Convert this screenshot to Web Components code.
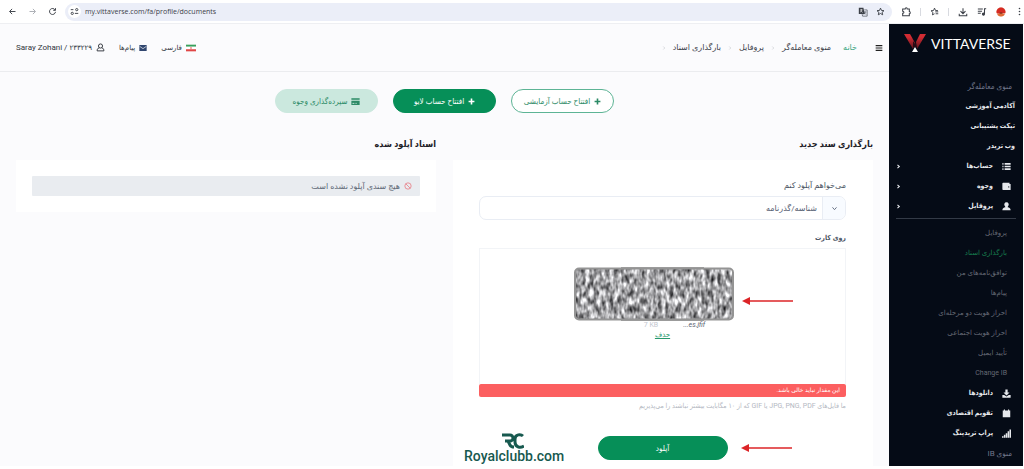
<!DOCTYPE html>
<html lang="fa" dir="rtl">
<head>
<meta charset="utf-8">
<title>بارگذاری اسناد</title>
<style>
html,body{margin:0;background:#fff}
body{--narrow:Roboto,"DejaVu Sans Condensed","DejaVu Sans",sans-serif;font-family:Roboto,"DejaVu Sans",sans-serif;font-size:7px;color:#3d424b}
</style>
</head>
<body>
<app-shell></app-shell>
<script>
const icons={
back:'<path d="M20 12H5M11 5l-7 7 7 7"/>',
fwd:'<path d="M4 12h15M13 5l7 7-7 7"/>',
reload:'<path d="M19 8A8 8 0 1 0 20 13M20 3v6h-6"/>',
tune:'<path d="M2 7h7M13 17h9" /><circle cx="6" cy="17" r="3"/><circle cx="18" cy="7" r="3"/>',
star:'<path d="M12 3l2.7 6.2 6.6.6-5 4.4 1.5 6.600L12 17.300l-5.800 3.500 1.500-6.600-5-4.400 6.600-.6z"/>',
starlist:'<path d="M12 18l-5.500 3 1.300-6.500-5-4.500 6.600-.6L12 3l2.700 6.200 6.600.6M14 13h8M15 18h7"/>',
puzzle:'<path d="M4 5h6c0-4 5-4 5 0h5v6c3 0 3 5 0 5v5H4v-6c4 0 4-5 0-5z"/>',
download:'<path d="M12 3v12M6 10l6 6 6-6M3 16v5h18v-5"/>',
music:'<path d="M2 5h12M2 10h10M2 15h7M18 17V4h4"/><circle cx="15.500" cy="17" r="2.500" fill="currentColor"/>',
dots:'<g fill="currentColor" stroke="none"><circle cx="12" cy="4" r="2.200"/><circle cx="12" cy="12" r="2.200"/><circle cx="12" cy="20" r="2.200"/></g>',
translate:'<path fill="currentColor" stroke="none" d="M2 2h11l3 15H2z"/><path d="M15 7h7v15H11l-1-5" stroke-width="1.500"/><path stroke="#fff" stroke-width="1.500" d="M5 7h6M8 5v2c0 4-2 5-3 5M7 9l4 4"/><path d="M14 12h6M17 11v1c0 3-2 5-3 6M15 14l4 4" stroke-width="1.500"/>',
avatar:'<circle cx="12" cy="12" r="11" fill="#f0c0a8" stroke="none"/><path d="M1 13C1-3 23-3 23 13c-3 4-7 1-11 2-4 1-8 2-11-2z" fill="#d62a22" stroke="none"/><path d="M9 13h6l1 8H8z" fill="#6c2c1b" stroke="none"/><path d="M3 18c5-3 13-3 18 0-4 6-14 6-18 0z" fill="#e06a34" stroke="none"/>',
menu:'<path d="M2 5h20M2 12h20M2 19h20" stroke-width="3.500"/>',
user:'<circle cx="12" cy="8" r="5.500"/><path d="M8.500 13C4 14 3 17 3 21h18c0-4-1-7-5.500-8"/>',
mail:'<path fill="currentColor" stroke="none" d="M1 3h22v18H1z"/><path d="M2 7l10 7 10-7" stroke="#fff" stroke-width="2"/>',
flag:'<path fill="#38a05c" stroke="none" d="M0 4h24v5H0z"/><path fill="#fff" stroke="none" d="M0 9h24v6H0z"/><path fill="#e04646" stroke="none" d="M0 15h24v5H0z"/><circle cx="12" cy="12" r="2" fill="#e04646" stroke="none"/>',
plus:'<path d="M12 2v20M2 12h20" stroke-width="5.500"/>',
card:'<path fill="currentColor" stroke="none" d="M1 3h22v4H1zM1 10h22v11H1z"/><path stroke="#cbe8de" d="M4 17h5M12 17h3"/>',
list:'<path d="M1 5h3M7 5h16M1 12h3M7 12h16M1 19h3M7 19h16" stroke-width="4.500"/>',
wallet:'<path fill="currentColor" stroke="none" d="M1 4q0-2 2-2h17v3h3v16H3q-2 0-2-2z"/><circle cx="18" cy="13" r="1.500" fill="#050b16" stroke="none"/>',
person:'<path fill="currentColor" stroke="none" d="M12 1a6 6 0 0 0-4 10.500l1 2.500c-5 1-8 3-8 8h22c0-5-3-7-8-8l1-2.500A6 6 0 0 0 12 1z"/>',
tray:'<path fill="currentColor" stroke="none" d="M9 1h6v8h5l-8 8-8-8h5zM1 16h5l6 4 6-4h5v7H1z"/>',
cal:'<path fill="currentColor" stroke="none" d="M2 4h3V1h3v3h8V1h3v3h3v18H2z"/>',
signal:'<path fill="currentColor" stroke="none" d="M0 19h4v4H0zM5 15h4v8H5zM10 11h4v12h-4zM15 6h4v17h-4zM20 1h4v22h-4z"/>',
ban:'<circle cx="12" cy="12" r="9.500"/><path d="M5.500 5.500l13 13"/>',
down:'<path d="M5 8l7 8 7-8" stroke-width="3"/>',
left:'<path d="M7 4l9 8-9 8" stroke-width="5"/>',
sep:'<path d="M9 6l6 6-6 6" stroke-width="2"/>'
};
const define=(name,css,html)=>customElements.define(name,class extends HTMLElement{
 constructor(){super();this.attachShadow({mode:'open'}).innerHTML='<style>*{box-sizing:border-box}a{color:inherit;text-decoration:none}'+css+'</style>'+html;}
});
customElements.define('ui-icon',class extends HTMLElement{
 connectedCallback(){
  const s=this.getAttribute('size')||9;
  if(!this.shadowRoot)this.attachShadow({mode:'open'});
  this.shadowRoot.innerHTML='<style>:host{display:inline-flex;flex:none}svg{display:block}</style><svg aria-hidden="true" width="'+s+'" height="'+s+'" viewBox="0 0 24 24" fill="none" stroke="currentColor" stroke-width="2.500">'+icons[this.getAttribute('name')]+'</svg>';
 }
});
define('browser-bar',`
:host{display:flex;direction:ltr;align-items:center;height:24px;box-sizing:border-box;padding:0 0 0 8px;background:#fff;color:#3c4048;border-bottom:1px solid #eeeff2}
.nav{display:flex;gap:11px;width:57px}
.nav ui-icon:nth-child(2){color:#a9acb2}
.url{flex:1;display:flex;align-items:center;gap:8px;height:18px;border-radius:9px;background:#ebeef8;padding:0 7px 0 3px}
.dot{display:flex;padding:2px;margin-right:-4px;border-radius:50%;background:#fff}
input{flex:1;min-width:0;border:0;padding:0;background:none;outline:0;font:7px "Open Sans",sans-serif;color:#3c4048}
.tools{display:flex;align-items:center;gap:9px;margin-left:9px}
i{width:1px;height:8px;background:#d8dae0}
`,`<div class="nav"><ui-icon name="back"></ui-icon><ui-icon name="fwd"></ui-icon><ui-icon name="reload"></ui-icon></div>
<div class="url"><span class="dot"><ui-icon name="tune"></ui-icon></span><input aria-label="Address" value="my.vittaverse.com/fa/profile/documents"><ui-icon name="translate" size="10"></ui-icon><ui-icon name="star"></ui-icon></div>
<div class="tools"><ui-icon name="puzzle" size="10"></ui-icon><i></i><ui-icon name="starlist"></ui-icon><i></i><ui-icon name="download" size="10"></ui-icon><ui-icon name="music" size="10"></ui-icon><ui-icon name="avatar" size="10"></ui-icon><ui-icon name="dots"></ui-icon></div>`);
define('top-bar',`
:host{display:flex;align-items:center;justify-content:space-between;box-sizing:border-box;height:48px;padding:0 6px 0 16px;border-bottom:1px solid #ebecef;font-size:8px}
nav,div{display:flex;align-items:center}
nav{gap:6px}
button{display:flex;border:0;background:none;padding:0;margin-left:12px;color:#222}
.home{color:#3aa57f;margin-left:6px}
div{gap:14px;font-size:7px}
div a{display:flex;align-items:center;gap:4px;color:#30343c}
.who{display:flex;align-items:center;gap:2px;font-size:8px}
.who small{font-size:7px}
nav ui-icon{color:#b5b8bf}nav button ui-icon{color:#222}
.m{color:#30466f}
`,`<nav><button aria-label="منو"><ui-icon name="menu" size="8"></ui-icon></button><a class="home" href="#">خانه</a><a href="#">منوی معامله‌گر</a><ui-icon name="sep" size="6"></ui-icon><a href="#">پروفایل</a><ui-icon name="sep" size="6"></ui-icon><a href="#">بارگذاری اسناد</a><ui-icon name="sep" size="6"></ui-icon></nav>
<div><a href="#"><ui-icon name="flag" size="10"></ui-icon><span>فارسی</span></a><a href="#"><ui-icon class="m" name="mail" size="8"></ui-icon><span>پیام‌ها</span></a><a href="#"><ui-icon name="user" size="9"></ui-icon><span class="who" dir="ltr">Saray Zohani / <small>۲۳۳۲۲۹</small></span></a></div>`);
define('pill-button',`
:host{display:block}
button{display:flex;align-items:center;justify-content:center;gap:4px;width:100%;height:24px;border-radius:12px;border:1px solid #068f58;background:#068f58;color:#fff;font-family:var(--narrow);font-size:8px;padding:0}
:host([kind=outline]) button{background:#fff;color:#2c8a66;border-color:#5db495}
:host([kind=soft]) button{background:#cbe8de;color:#2c8a66;border-color:#cbe8de}
`,`<button><slot></slot></button>`);
define('side-item',`
:host{display:block}
a{display:flex;align-items:center;height:20px;color:#e6e8ec;font-family:var(--narrow);font-weight:bold;font-size:7px;padding-right:8px}
::slotted(ui-icon){margin:0 4px 0 9px}
.arrow{margin-right:auto;margin-left:7px;display:none}
:host([more]) .arrow{display:inline-flex}
:host([kind=head]) a{color:#70768a;font-weight:normal;font-size:8px;padding-right:11px}
:host([kind=sub]) a,:host([kind=active]) a{color:#656a75;font-family:inherit;font-weight:normal;padding-right:16px}
:host([kind=active]) a{color:#17804f}
`,`<a href="#"><slot name="icon"></slot><slot></slot><ui-icon class="arrow" name="left" size="5"></ui-icon></a>`);
define('side-bar',`
:host{display:block;background:#050b16;width:134px;margin-right:1px;padding-bottom:3px}
.logo{display:flex;direction:ltr;align-items:center;box-sizing:border-box;gap:5px;height:52px;padding:0 0 14px 15px;color:#fff;font:14px Lato,sans-serif}
hr{border:0;border-top:1px solid #333a46;margin:2px 7px 4px}
`,`<div class="logo"><svg width="22" height="20" viewBox="0 0 22 20" aria-hidden="true"><defs><linearGradient id="f" x1="0" y1="0" x2="0" y2="1"><stop offset=".2" stop-color="#d22c33"/><stop offset="1" stop-color="#5a121c"/></linearGradient></defs><path d="M0 1h6l5 9-2 6z" fill="url(#f)"/><path d="M22 1h-6l-4 8 1 7z" fill="url(#f)"/><path d="M9 8l2 3 1-2v5H9z" fill="#2a0c16"/><path d="M11 14l3 5H8z" fill="#fff"/></svg><span>VITTAVERSE</span></div>
<side-item kind="head">منوی معامله‌گر</side-item><side-item>آکادمی آموزشی</side-item><side-item>تیکت پشتیبانی</side-item><side-item>وب تریدر</side-item>
<side-item more><ui-icon slot="icon" name="list"></ui-icon>حساب‌ها</side-item><side-item more><ui-icon slot="icon" name="wallet"></ui-icon>وجوه</side-item><side-item more><ui-icon slot="icon" name="person"></ui-icon>پروفایل</side-item><hr>
<side-item kind="sub">پروفایل</side-item><side-item kind="active">بارگذاری اسناد</side-item><side-item kind="sub">توافق‌نامه‌های من</side-item><side-item kind="sub">پیام‌ها</side-item><side-item kind="sub">احراز هویت دو مرحله‌ای</side-item><side-item kind="sub">احراز هویت اجتماعی</side-item><side-item kind="sub">تأیید ایمیل</side-item><side-item kind="sub">Change IB</side-item>
<side-item><ui-icon slot="icon" name="tray"></ui-icon>دانلودها</side-item><side-item><ui-icon slot="icon" name="cal"></ui-icon>تقویم اقتصادی</side-item><side-item><ui-icon slot="icon" name="signal"></ui-icon>پراپ تریدینگ</side-item><side-item kind="head">منوی IB</side-item>`);
define('doc-panel',`
:host{display:flex;flex-direction:column}
h2{margin:0 0 8px;font-family:var(--narrow);font-size:9px;line-height:16px;font-weight:bold;color:#1d2026}
section{background:#fff}
:host([grow]) section{flex:1}
`,`<h2><slot name="title"></slot></h2><section><slot></slot></section>`);
define('empty-note',`
:host{display:block;padding:16px}
div{display:flex;align-items:center;gap:4px;height:20px;padding:0 8px;background:#e9ecf0;border-radius:1px;color:#606977;font-size:8px}
ui-icon{color:#e88088}
`,`<div role="status"><ui-icon name="ban" size="8"></ui-icon><slot></slot></div>`);
define('red-arrow',`:host{display:block;width:51px}svg{display:block}`,`<svg width="51" height="8" viewBox="0 0 51 8" aria-hidden="true"><path d="M7 4h44" stroke="#dc2427" stroke-width="1.500"/><path d="M0 4l8-4v8z" fill="#dc2427"/></svg>`);
define('file-preview',`
:host{display:flex;flex-direction:column;align-items:center;font-size:7px}
.row{display:flex;gap:25px;height:9px;line-height:9px;align-items:center;margin-left:24px}
.size{color:#c3c7d0}
.name{color:#5a6270;font-style:italic}
button{border:0;background:none;padding:0;height:10px;line-height:10px;font:inherit;color:#28996d;text-decoration:underline}
svg{display:block}
.pic{position:relative;margin-right:18px}
red-arrow{position:absolute;left:100%;top:30px;margin-left:8px}
`,`<div class="pic"><svg width="160" height="54" viewBox="0 0 160 54" role="img" aria-label="شناسه"><defs><filter id="n" x="0" y="0" width="100%" height="100%" color-interpolation-filters="sRGB"><feTurbulence type="fractalNoise" baseFrequency="0.25 0.130" numOctaves="2" seed="4"/><feColorMatrix values="1.400 0 0 0 -.06  1.400 0 0 0 -.06  1.400 0 0 0 -.05  0 0 0 0 1"/></filter><clipPath id="c"><rect x="1" y="2" width="158" height="50" rx="4"/></clipPath></defs><path d="M47 .5h83M47 53.500h83" stroke="#a3a3a3"/><g clip-path="url(#c)"><rect width="160" height="54" filter="url(#n)"/></g><rect x="1" y="1.500" width="158" height="51" rx="4" fill="none" stroke="#949494" stroke-width="2"/></svg><red-arrow></red-arrow></div>
<div class="row"><span class="name" dir="ltr">...es.jfif</span><span class="size" dir="ltr">7 KB</span></div><button type="button">حذف</button>`);
define('upload-form',`
:host{display:block;padding:20px 27px 6px 26px;position:relative}
label,h3{display:block;margin:0;font-size:8px;line-height:12px;font-weight:normal;color:#4c5563}
h3{margin:12px 0 4px;font-family:var(--narrow);font-size:7px;font-weight:bold}
.select{display:flex;margin-top:4px;height:24px;border:1px solid #e9edf4;border-radius:7px;background:#fff;overflow:hidden}
.chev{display:flex;align-items:center;justify-content:center;width:23px;border-left:1px solid #e9edf4;background:#f8fbff;color:#596579}
select{flex:1;appearance:none;border:0;background:none;padding:0 5px;font:inherit;font-size:8px;color:#566072;outline:0}
.drop{height:136px;border:1px solid #f2f4f7;border-bottom:0;padding-top:18px}
.err{margin:0;height:13px;line-height:12px;border-radius:2px;background:#fc5f60;color:#fff;padding:0 6px;font-size:6px}
.hint{margin:0;line-height:18px;font-family:var(--narrow);font-size:7px;color:#b4b8c2}
.act{display:flex;justify-content:center;margin-top:21px}
.wrap{position:relative;width:130px}
.wrap red-arrow{position:absolute;left:100%;top:8px;margin-left:13px}
.mark{position:absolute;left:11px;bottom:2px;width:98px;text-align:center;direction:ltr;color:#17594f;font:500 14px/15px Roboto,sans-serif}
.mark svg{display:block;margin:0 auto}
`,`<form><label for="t">می‌خواهم آپلود کنم</label><div class="select"><span class="chev"><ui-icon name="down" size="7"></ui-icon></span><select id="t"><option>شناسه/گذرنامه</option></select></div>
<h3>روی کارت</h3><div class="drop"><file-preview></file-preview></div><p class="err" role="alert">این مقدار نباید خالی باشد.</p><p class="hint">ما فایل‌های JPG, PNG, PDF یا GIF که از ۱۰ مگابایت بیشتر نباشند را می‌پذیریم</p>
<div class="act"><div class="wrap"><pill-button>آپلود</pill-button><red-arrow></red-arrow></div></div></form>
<div class="mark"><svg width="22" height="16" viewBox="0 0 22 16" aria-hidden="true" fill="none" stroke="#17594f" stroke-width="3"><path d="M0 2h8a3 3 0 0 1 0 6H3M6 8l2 4q1 2 4 2M21 3c-2-2-8-2-8 3v3c0 6 6 6 9 4"/></svg>Royalclubb.com</div>`);
define('app-shell',`
:host{display:block}
.body{display:flex;align-items:stretch}
main{flex:1;min-width:0;display:flex;flex-direction:column;background:#fbfbfd}
.actions{display:flex;justify-content:center;gap:15px;margin-top:17px}
.actions pill-button{width:103px}
.cols{flex:1;display:grid;grid-template-columns:1fr 1fr;gap:17px;padding:23px 16px 0}
`,`<browser-bar></browser-bar><div class="body"><side-bar></side-bar><main><top-bar></top-bar>
<div class="actions"><pill-button kind="outline"><ui-icon name="plus" size="7"></ui-icon>افتتاح حساب آزمایشی</pill-button><pill-button><ui-icon name="plus" size="7"></ui-icon>افتتاح حساب لایو</pill-button><pill-button kind="soft"><ui-icon name="card" size="9"></ui-icon>سپرده‌گذاری وجوه</pill-button></div>
<div class="cols"><doc-panel grow><span slot="title">بارگذاری سند جدید</span><upload-form></upload-form></doc-panel><doc-panel><span slot="title">اسناد آپلود شده</span><empty-note>هیچ سندی آپلود نشده است</empty-note></doc-panel></div></main></div>`);
</script>
</body>
</html>
